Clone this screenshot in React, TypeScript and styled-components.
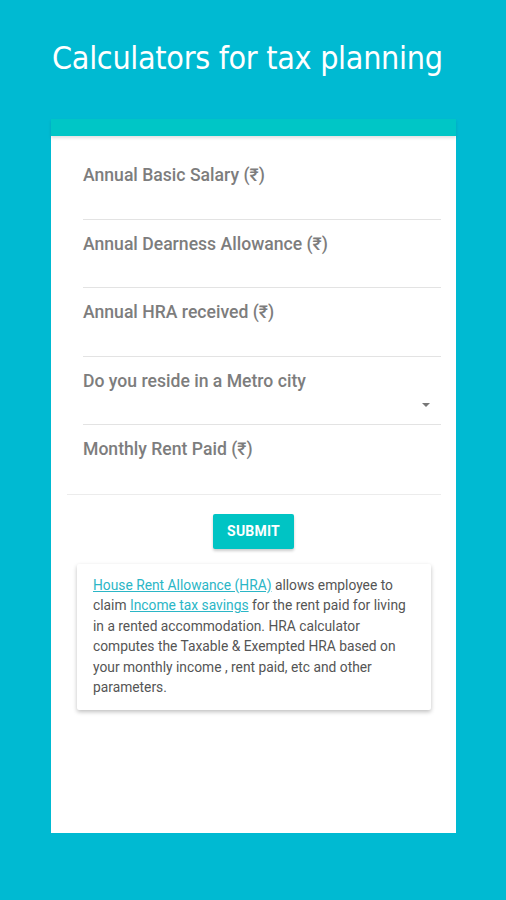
import React from 'react';
import styled, { createGlobalStyle } from 'styled-components';

const Global = createGlobalStyle`
  html, body {
    margin: 0;
    padding: 0;
    background: #00bad2;
  }
  body {
    font-family: Roboto, "Noto Sans", sans-serif;
  }
`;

const Page = styled.div`
  width: 506px;
  height: 900px;
  background: #00bad2;
  display: flex;
  flex-direction: column;
  align-items: stretch;
`;

const Header = styled.header`
  height: 119px;
  display: flex;
  align-items: flex-start;
  padding: 37px 0 0 52px;
  box-sizing: border-box;
`;

const Title = styled.h1`
  margin: 0;
  font-family: "DejaVu Sans Condensed", "DejaVu Sans", sans-serif;
  font-weight: normal;
  font-size: 32px;
  line-height: 42px;
  color: #ffffff;
  letter-spacing: -0.3px;
`;

const Card = styled.main`
  margin: 0 50px 0 51px;
  height: 714px;
  background: #ffffff;
  display: flex;
  flex-direction: column;
`;

const TopBar = styled.div`
  height: 17px;
  background: #00c6c6;
  box-shadow: 0 2px 3px rgba(0, 0, 0, 0.12);
`;

const Form = styled.form`
  display: flex;
  flex-direction: column;
  padding: 15px 15px 0 32px;
`;

const Field = styled.label<{ $last?: boolean }>`
  position: relative;
  display: flex;
  flex-direction: column;
  height: 68.5px;
  box-sizing: border-box;
  border-bottom: ${(p) => (p.$last ? 'none' : '1px solid #e3e3e3')};
  padding-top: 13px;
`;

const FieldLabel = styled.span`
  font-family: Roboto, sans-serif;
  font-weight: 500;
  font-size: 17.6px;
  line-height: 22px;
  color: #7d7d7d;
`;

const Caret = styled.span`
  position: absolute;
  right: 11px;
  bottom: 17px;
  width: 0;
  height: 0;
  border-left: 4px solid transparent;
  border-right: 4px solid transparent;
  border-top: 4px solid #777;
`;

const Divider = styled.div`
  height: 1px;
  background: #ececec;
  margin: 0 15px 0 16px;
`;

const ButtonRow = styled.div`
  display: flex;
  justify-content: center;
  padding-top: 19px;
`;

const SubmitButton = styled.button`
  width: 81px;
  height: 35px;
  border: none;
  border-radius: 2px;
  background: #00c4c4;
  color: #ffffff;
  font-family: Roboto, sans-serif;
  font-weight: 700;
  font-size: 14px;
  letter-spacing: 0.2px;
  text-transform: uppercase;
  box-shadow: 0 2px 3px rgba(0, 0, 0, 0.2);
  cursor: pointer;
`;

const InfoCard = styled.section`
  margin: 15px 25px 0 26px;
  padding: 11px 14px 12px 16px;
  background: #ffffff;
  box-shadow: 0 2px 4px rgba(0, 0, 0, 0.25);
  border-radius: 2px;
`;

const InfoText = styled.p`
  margin: 0;
  font-family: Roboto, sans-serif;
  font-size: 13.8px;
  line-height: 20.6px;
  color: #555555;
`;

const Link = styled.a`
  color: #2bb6c6;
  text-decoration: underline;
`;

const fields = [
  { label: 'Annual Basic Salary (₹)' },
  { label: 'Annual Dearness Allowance (₹)' },
  { label: 'Annual HRA received (₹)' },
  { label: 'Do you reside in a Metro city', select: true },
  { label: 'Monthly Rent Paid (₹)' },
];

export default function App() {
  return (
    <Page>
      <Global />
      <Header>
        <Title>Calculators for tax planning</Title>
      </Header>
      <Card>
        <TopBar />
        <Form onSubmit={(e) => e.preventDefault()}>
          {fields.map((f, i) => (
            <Field key={f.label} $last={i === fields.length - 1}>
              <FieldLabel>{f.label}</FieldLabel>
              {f.select && <Caret />}
            </Field>
          ))}
        </Form>
        <Divider />
        <ButtonRow>
          <SubmitButton type="button">Submit</SubmitButton>
        </ButtonRow>
        <InfoCard>
          <InfoText>
            <Link href="#">House Rent Allowance (HRA)</Link> allows employee to
            <br />
            claim <Link href="#">Income tax savings</Link> for the rent paid for living in a rented
            accommodation. HRA calculator computes the Taxable &amp; Exempted HRA based on your
            monthly income , rent paid, etc and other parameters.
          </InfoText>
        </InfoCard>
      </Card>
    </Page>
  );
}
